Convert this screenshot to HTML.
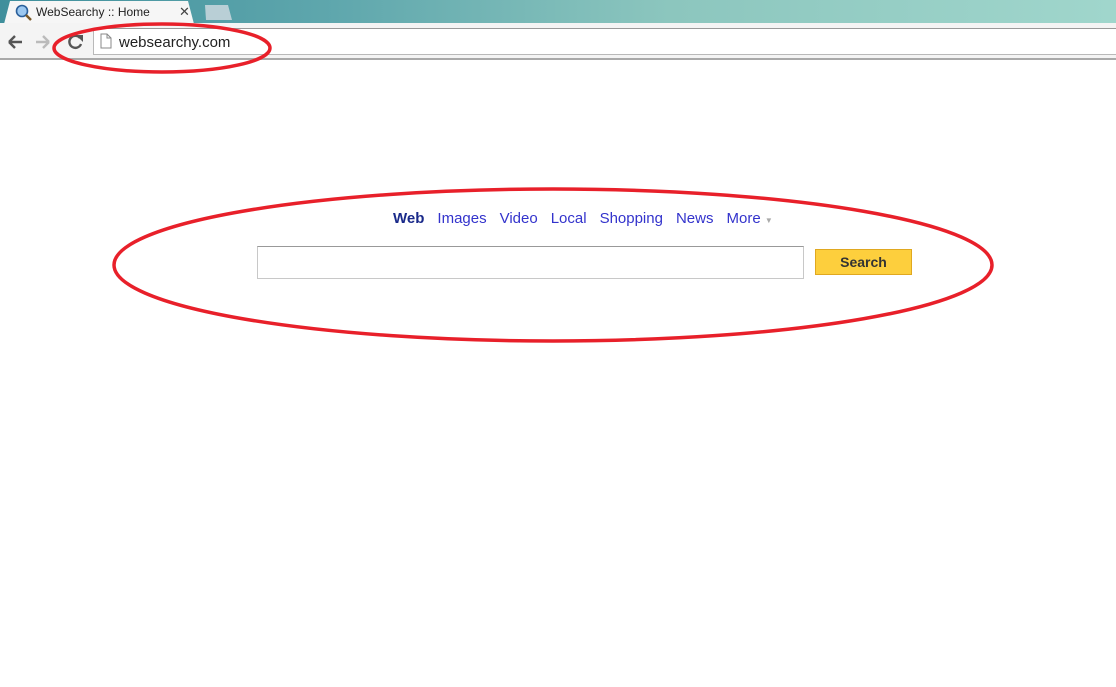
<!DOCTYPE html>
<html><head><style>
body{margin:0;width:1116px;height:687px;background:#fff;position:relative;overflow:hidden;font-family:"Liberation Sans",Arial,sans-serif}
.top{position:absolute;left:0;top:0;width:1116px;height:24px;background:linear-gradient(90deg,#3f8f9c 0%,#5fa7ad 30%,#8cc6be 60%,#a0d6cc 100%)}
.tab{position:absolute;left:4px;top:1px;width:190px;height:23px;background:#f6f6f6;border-radius:4px 4px 0 0;clip-path:polygon(6px 0,184px 0,190px 23px,0 23px)}
.tab2{position:absolute;left:202px;top:5px;width:30px;height:15px;background:#b9cfd6;clip-path:polygon(3px 0,26px 0,30px 15px,4px 15px);}
.bar{position:absolute;left:0;top:23px;width:1116px;height:35px;background:#f4f4f4;border-bottom:2px solid #a9a9a9}
.url{position:absolute;left:93px;top:28px;width:1030px;height:25px;background:#fff;border:1px solid #b9b9b9;border-top-color:#999}
.nav{position:absolute;top:210px;left:393px;font-size:15px;color:#3333cc;white-space:nowrap}
.nav span{margin-right:13px}
</style></head><body>
<div class="top"></div>
<div class="tab"></div>
<div class="tab2"></div>
<svg style="position:absolute;left:15px;top:4px" width="18" height="18"><circle cx="7" cy="7" r="5.5" fill="#9cc8f0" stroke="#2a5f9a" stroke-width="1.6"/><line x1="11" y1="11" x2="16" y2="16" stroke="#7a5a2a" stroke-width="2.5"/></svg>
<div style="position:absolute;left:36px;top:5px;font-size:12px;color:#222">WebSearchy :: Home</div>
<div style="position:absolute;left:179px;top:4px;font-size:13px;color:#444">✕</div>
<div class="bar"></div>
<div class="url"></div>
<svg style="position:absolute;left:6px;top:32px" width="80" height="20"><path d="M3 10H16M3 10L9 4M3 10L9 16" stroke="#555" stroke-width="2.4" fill="none"/><path d="M30 10H43M43 10L37 4M43 10L37 16" stroke="#bbb" stroke-width="2.4" fill="none"/><path d="M74 6A6 6 0 1 0 75 12" stroke="#555" stroke-width="2.4" fill="none"/><path d="M70 3L77 3L77 10Z" fill="#555"/></svg>
<svg style="position:absolute;left:100px;top:33px" width="12" height="16"><path d="M1 1H7L11 5V15H1Z" fill="#fff" stroke="#888"/><path d="M7 1V5H11" fill="none" stroke="#888"/></svg>
<div style="position:absolute;left:119px;top:34px;font-size:15px;color:#222">websearchy.com</div>
<div class="nav"><span style="font-weight:bold;color:#1a2a8a">Web</span><span>Images</span><span>Video</span><span>Local</span><span>Shopping</span><span>News</span><span>More <small style="color:#aaa;font-size:8px">▼</small></span></div>
<div style="position:absolute;left:257px;top:246px;width:545px;height:31px;border:1px solid #c8c8c8;border-top-color:#999"></div>
<div style="position:absolute;left:815px;top:249px;width:95px;height:24px;background:#fdcf3d;border:1px solid #e0a820;font-weight:bold;font-size:14px;color:#333;text-align:center;line-height:24px">Search</div>
<svg style="position:absolute;left:0;top:0" width="1116" height="687"><ellipse cx="162" cy="48" rx="108" ry="24" fill="none" stroke="#e8202a" stroke-width="3.5"/><ellipse cx="553" cy="265" rx="439" ry="76" fill="none" stroke="#e8202a" stroke-width="3.5"/></svg>
</body></html>
